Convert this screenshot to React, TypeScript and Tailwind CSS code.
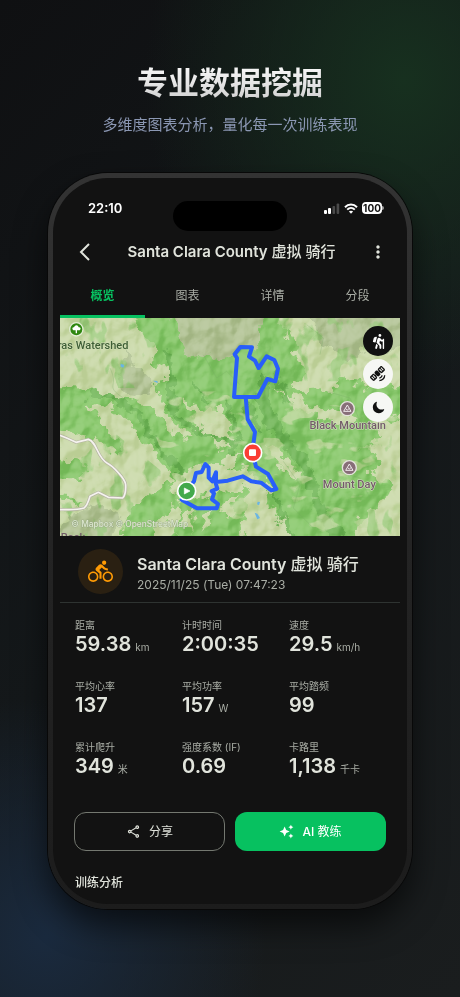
import { FaHiking } from "react-icons/fa";
import { IoMoon } from "react-icons/io5";
import {
  MdAutoAwesome,
  MdMoreVert,
  MdOutlineDirectionsBike,
  MdOutlineShare,
  MdSatelliteAlt,
} from "react-icons/md";

const tabs = ["概览", "图表", "详情", "分段"];

const stats = [
  { label: "距离", value: "59.38", unit: "km" },
  { label: "计时时间", value: "2:00:35" },
  { label: "速度", value: "29.5", unit: "km/h" },
  { label: "平均心率", value: "137" },
  { label: "平均功率", value: "157", unit: "W" },
  { label: "平均踏频", value: "99" },
  { label: "累计爬升", value: "349", unit: "米" },
  { label: "强度系数 (IF)", value: "0.69" },
  { label: "卡路里", value: "1,138", unit: "千卡" },
];

function StatusBar() {
  return (
    <div className="relative flex h-[46px] items-center justify-between pr-4 pl-7 text-white">
      <span className="text-[13px] leading-4 font-semibold">22:10</span>
      <div className="absolute top-4 left-1/2 h-[30px] w-[114px] -translate-x-1/2 rounded-full bg-black" />
      <div className="flex items-center gap-1">
        <svg viewBox="0 0 16 11" className="h-[11px] w-4" aria-hidden="true">
          <rect x="0" y="7" width="3" height="4" rx="1" fill="#fff" />
          <rect x="4" y="5" width="3" height="6" rx="1" fill="#fff" />
          <rect x="8.5" y="3" width="2.6" height="8" rx="1" fill="#4a4a4a" />
          <rect x="12.6" y="0.5" width="2.6" height="10.5" rx="1" fill="#4a4a4a" />
        </svg>
        <svg viewBox="0 0 14 11" className="h-[11px] w-[14px]" fill="none" stroke="#fff" aria-hidden="true">
          <path d="M1 4.2C4.4.7 9.6.7 13 4.2" strokeWidth="2" />
          <path d="M3.2 6.7C5.4 4.5 8.6 4.5 10.8 6.7" strokeWidth="1.9" />
          <path d="M7 10.8 4.9 8.6C6.1 7.5 7.9 7.5 9.1 8.6Z" fill="#fff" stroke="none" />
        </svg>
        <div className="flex items-center">
          <span className="flex h-3 w-5 items-center justify-center rounded bg-white text-[10px] leading-3 font-bold text-[#111]">
            100
          </span>
          <span className="h-1 w-0.5 rounded-r bg-white/60" />
        </div>
      </div>
    </div>
  );
}

function RouteMap() {
  return (
    <svg viewBox="0 0 1020 654" className="block w-full" role="img" aria-label="骑行路线">
      <defs>
        <filter id="ragged" x="-5%" y="-5%" width="110%" height="110%" colorInterpolationFilters="sRGB">
          <feTurbulence type="fractalNoise" baseFrequency="0.03" numOctaves="3" seed="4" result="n" />
          <feDisplacementMap in="SourceGraphic" in2="n" scale="56" xChannelSelector="R" yChannelSelector="G" />
        </filter>
        <filter id="meadow" x="0" y="0" width="100%" height="100%" colorInterpolationFilters="sRGB">
          <feTurbulence type="fractalNoise" baseFrequency="0.012 0.022" numOctaves="3" seed="23" />
          <feColorMatrix values="0 0 0 0 0.77  0 0 0 0 0.85  0 0 0 0 0.64  14 0 0 0 -8.5" />
        </filter>
        <filter id="woods" x="0" y="0" width="100%" height="100%" colorInterpolationFilters="sRGB">
          <feTurbulence type="fractalNoise" baseFrequency="0.02 0.012" numOctaves="3" seed="7" />
          <feColorMatrix values="0 0 0 0 0.56  0 0 0 0 0.79  0 0 0 0 0.45  0 14 0 0 -8.3" />
        </filter>
        <filter id="relief" x="0" y="0" width="100%" height="100%" colorInterpolationFilters="sRGB">
          <feTurbulence type="fractalNoise" baseFrequency="0.013 0.011" numOctaves="3" seed="11" />
          <feColorMatrix values="0 0 0 0 0  0 0 0 0 0  0 0 0 0 0  1 0 0 0 0" result="h" />
          <feDiffuseLighting in="h" surfaceScale="45" diffuseConstant="0.75" lightingColor="#ffffff">
            <feDistantLight azimuth="225" elevation="42" />
          </feDiffuseLighting>
        </filter>
        <clipPath id="wooded">
          <path d="M300 220H620L1020 300V654H560L340 480 280 340Z" />
        </clipPath>
        <clipPath id="open">
          <path d="M0 350H170L330 480V654H0ZM0 0H290V210H0ZM640 0H1020V190H700ZM880 300H1020V654H860Z" />
        </clipPath>
      </defs>
      <rect width="1020" height="654" fill="#8dca71" />
      <g filter="url(#ragged)">
        <g fill="#cbdaab">
          <path d="M-30-30H215L240 40 290 90 270 130 330 160 325 190 290 195 300 235 325 290 350 320 395 350 370 365 330 340 300 290 270 262 210 242 160 244 100 218-30 208Z" />
          <path d="M645-30 680 60 700 110 735 140 742 172 690 200 720 222 800 215 860 188 905 192 935 215 1050 190V-30Z" />
          <path d="M80 255 150 270 190 290 270 400 345 480 300 520 240 540 205 570 190 690H-30V345L20 340 110 370 170 400 190 390 120 310Z" />
          <path d="M370 240 420 270 480 270 500 300 525 370 480 400 430 340 395 290ZM390 330 440 320 480 360 470 375ZM350 475 400 450 470 440 540 400 500 460 580 440 560 480 620 480 640 530 570 510 480 520 400 540 330 520Z" />
          <path d="M560 520 600 495 620 560 680 600 690 690H540L560 580ZM290 620 350 550 365 590 320 690H270ZM370 600 400 570 400 640ZM430 590 470 580 420 650ZM480 560 540 530 500 600Z" />
          <path d="M640 200 720 240 800 280 900 300 870 320 790 300 700 270ZM620 380 660 400 720 480 700 490 650 430ZM1050 290V690H870L900 600 960 560 1000 500 930 470 970 420 900 390 960 350 930 320Z" />
        </g>
        <path d="M320-30 360 60 390 115 440 122 530 100 545 85 600 80 600 30 630-30ZM740-30 780 60 860 130 930 80 970 100 1050 80V-30ZM200 90 170 170 200 225 260 235 280 200 230 150ZM20 600 100 560 190 590 140 690H-30Z" fill="#b6c69a" />
        <path d="M595 10 640 50 625 110 600 60ZM680 30 710 70 690 150 720 190 650 190 690 100ZM-20 425 90 440 60 480-20 475ZM-20 530 70 545 10 560ZM120 340 190 390 180 410ZM770 470 900 450 840 500ZM780 560 930 510 850 590ZM760 620 900 580 880 630ZM850 350 950 380 870 390Z" fill="#8bc86f" />
        <g fill="none" stroke="#78b960" strokeLinecap="round">
          <path d="M320 100C350 200 300 260 370 310S470 350 530 370" strokeWidth="18" />
          <path d="M100 230C230 250 260 320 290 370S330 430 370 480" strokeWidth="18" />
          <path d="M610 190C590 290 680 370 720 420S760 580 830 650" strokeWidth="34" />
          <path d="M500 250 540 370 510 410M650 170 690 260M640 520 690 650M400 200 440 250M560 260 600 340" strokeWidth="14" />
        </g>
      </g>
      <g clipPath="url(#wooded)" opacity="0.75"><rect width="1020" height="654" filter="url(#meadow)" /></g>
      <g clipPath="url(#open)" opacity="0.6"><rect width="1020" height="654" filter="url(#woods)" /></g>
      <rect width="1020" height="654" filter="url(#relief)" className="opacity-40 mix-blend-soft-light" />
      <g fill="none" stroke="#75a663" strokeWidth="1.5" opacity="0.55">
        <path d="M150 150C180 210 130 200 190 240M430 110 470 180 500 160 540 200M800 220 870 240 900 310 960 340M740 20 790 60 780 110M670 430 720 500 700 570 760 630M830 460 900 480 930 540" />
      </g>
      <path d="m182 137 11 4-3 8-8-3ZM279 188l13 1 1 7ZM593 551l7 1-3 10-6-3ZM584 584l8 3 8 13-8 4Z" fill="#69b5e3" />
      <path
        d="M-5 350 20 360 48 373 85 364C112 372 109 416 142 436 158 444 195 481 197 500 198 520 193 535 188 540L145 538 115 523 90 535C84 555 79 566 72 570 45 578 22 574-5 575"
        fill="none" stroke="#b6b4a5" strokeWidth="9" strokeLinejoin="round"
      />
      <path
        d="M-5 350 20 360 48 373 85 364C112 372 109 416 142 436 158 444 195 481 197 500 198 520 193 535 188 540L145 538 115 523 90 535C84 555 79 566 72 570 45 578 22 574-5 575"
        fill="none" stroke="#f5f3ee" strokeWidth="5" strokeLinejoin="round"
      />
      <path
        d="M557 237H522L531 120 524 109 541 87 576 88 567 116 585 128 596 150 620 115 643 126 654 152 646 190 622 183 594 237H557L563 304 585 342 577 400 588 446 624 468 649 513 634 517 603 494 574 490 548 475 503 488 468 492 468 463 457 490 446 479 446 449 436 438 425 462 408 465 402 490 380 518 365 545 411 571H470L474 558 456 544 462 526 455 519 472 512 466 492"
        fill="none" stroke="#285efa" strokeWidth="12" strokeLinejoin="round" strokeLinecap="round"
      />
      <g stroke="#fff" strokeWidth="5">
        <circle cx="380" cy="519" r="27" fill="#43a94b" />
        <circle cx="578" cy="404" r="27" fill="#fa3e34" />
      </g>
      <path d="m373 510 17 9-17 9Z" fill="#fff" stroke="#fff" strokeWidth="2" strokeLinejoin="round" />
      <rect x="567" y="394" width="21" height="20" rx="3" fill="#fff" />
      <circle cx="49" cy="34" r="20" fill="#2e870f" stroke="#e3edd5" strokeWidth="4" />
      <path d="M47 46V37H40C35 33 37 27 42 28 45 20 54 20 56 28 62 27 64 33 59 37H51V46Z" fill="#fff" />
      <g fill="#876e78" stroke="#e5e3dd" strokeWidth="4">
        <circle cx="862" cy="272" r="21" />
        <circle cx="868" cy="449" r="21" />
      </g>
      <g fill="none" stroke="#f0eaed" strokeWidth="3" strokeLinejoin="round">
        <path d="M851 280 862 261 873 280ZM857 272 862 276 867 272M857 457 868 438 879 457ZM863 449 868 453 873 449" />
      </g>
      <g className="font-[Roboto,sans-serif] text-[33px] font-medium" strokeLinejoin="round" paintOrder="stroke">
        <text x="-7" y="93" fill="#3e5f35" stroke="#d3dfba" strokeWidth="3">ras Watershed</text>
        <text x="863" y="332" textAnchor="middle" fill="#725c68" stroke="#d7e1c4" strokeWidth="3">Black Mountain</text>
        <text x="868" y="509" textAnchor="middle" fill="#725c68" stroke="#d7e1c4" strokeWidth="3">Mount Day</text>
        <text x="2" y="668" fill="#725c68">Rock</text>
      </g>
      <text x="34" y="627" fill="#dde7d0" stroke="#8fa17d" strokeWidth="2" paintOrder="stroke" className="font-[Inter,sans-serif] text-[25px] font-medium">
        © Mapbox © OpenStreetMap
      </text>
    </svg>
  );
}

export default function App() {
  return (
    <main className="min-h-screen bg-[radial-gradient(ellipse_260px_300px_at_88%_8%,#17301f,transparent),radial-gradient(ellipse_220px_240px_at_10%_94%,#1a2a3e,transparent),linear-gradient(135deg,#0f1012,#14181a_50%,#1a1d1e)] px-12 pt-[61px] pb-[87px] font-[Inter,'Noto_Sans_CJK_SC',sans-serif] text-[#e1e4dc]">
      <header className="flex flex-col items-center gap-[7px] text-center whitespace-nowrap">
        <h1 className="bg-linear-to-b from-white to-[#cccccc] bg-clip-text text-[31px] leading-[44px] font-bold text-transparent">
          专业数据挖掘
        </h1>
        <p className="text-[15px] leading-[26px] text-[#8b97b3]">多维度图表分析，量化每一次训练表现</p>
      </header>

      <section className="mt-[35px] rounded-[60px] bg-linear-to-b from-[#333333] via-[#242424] to-[#1c1c1c] p-[5px] shadow-[0_0_0_1px_#080808,0_16px_32px_rgba(0,0,0,0.6)]">
        <div className="rounded-[55px] bg-[#121212] px-[7px] pt-[7px] pb-[11px]">
          <StatusBar />

          <nav className="flex h-[42px] items-center justify-between pr-3 pl-[15px]">
            <button type="button" aria-label="返回" className="flex size-5 items-center justify-center">
              <svg viewBox="0 0 12 18" className="h-[18px] w-3" fill="none" stroke="currentColor" strokeWidth="2" aria-hidden="true">
                <path d="M10 1 2 9l8 8" />
              </svg>
            </button>
            <h2 className="text-[15px] font-semibold whitespace-nowrap">
              Santa Clara County <span className="font-medium">虚拟 骑行</span>
            </h2>
            <button type="button" aria-label="更多">
              <MdMoreVert size={20} />
            </button>
          </nav>

          <div role="tablist" className="grid h-[45px] grid-cols-4 text-xs text-[#a9ada5]">
            {tabs.map((tab, i) => (
              <button
                key={tab}
                type="button"
                role="tab"
                aria-selected={i === 0}
                className="border-b-[3px] border-transparent pt-1 aria-selected:border-[#07c160] aria-selected:font-bold aria-selected:text-[#07c160]"
              >
                {tab}
              </button>
            ))}
          </div>

          <div className="relative">
            <RouteMap />
            <div className="absolute top-2 right-[7px] flex flex-col gap-[3px]">
              <button type="button" aria-label="热力" className="flex size-[30px] items-center justify-center rounded-full bg-[#111] text-white">
                <FaHiking size={15} />
              </button>
              <button type="button" aria-label="卫星" className="flex size-[30px] items-center justify-center rounded-full bg-[#f6f7f4] text-[#111]">
                <MdSatelliteAlt size={16} />
              </button>
              <button type="button" aria-label="夜间" className="flex size-[30px] items-center justify-center rounded-full bg-[#f6f7f4] text-[#111]">
                <IoMoon size={13} />
              </button>
            </div>
          </div>

          <div className="flex h-[67px] items-center gap-[14px] border-b border-[#2e3331] pt-2 pr-3 pb-1 pl-[18px]">
            <div className="flex size-[45px] shrink-0 items-center justify-center rounded-full bg-[#2a2012] text-[#ff9b05]">
              <MdOutlineDirectionsBike size={25} />
            </div>
            <div className="pt-[3px] whitespace-nowrap">
              <h3 className="text-base leading-6 font-semibold">
                Santa Clara County <span className="font-medium">虚拟 骑行</span>
              </h3>
              <p className="text-xs leading-[18px] text-[#a9ada5]">2025/11/25 (Tue) 07:47:23</p>
            </div>
          </div>

          <dl className="grid grid-cols-3 gap-y-[22px] pt-[13px] pr-1 pl-[15px] whitespace-nowrap">
            {stats.map((s) => (
              <div key={s.label} className="h-[39px]">
                <dt className="text-[10px] leading-[18px] text-[#a9ada5]">{s.label}</dt>
                <dd className="text-xl leading-5 font-semibold">
                  {s.value}
                  {s.unit && <span className="ml-1 text-[10px] font-normal text-[#a9ada5]">{s.unit}</span>}
                </dd>
              </div>
            ))}
          </dl>

          <div className="mt-[35px] grid grid-cols-2 gap-[10px] px-[14px] text-xs">
            <button type="button" className="flex h-[39px] items-center justify-center gap-2 rounded-xl border border-[#747870]">
              <MdOutlineShare size={15} />
              分享
            </button>
            <button type="button" className="flex h-[39px] items-center justify-center gap-2 rounded-xl bg-[#07c160] text-white">
              <MdAutoAwesome size={15} />
              <span>
                <span className="font-medium">AI</span> 教练
              </span>
            </button>
          </div>

          <h3 className="mt-[22px] px-[15px] text-xs leading-5 font-medium">训练分析</h3>
        </div>
      </section>
    </main>
  );
}
